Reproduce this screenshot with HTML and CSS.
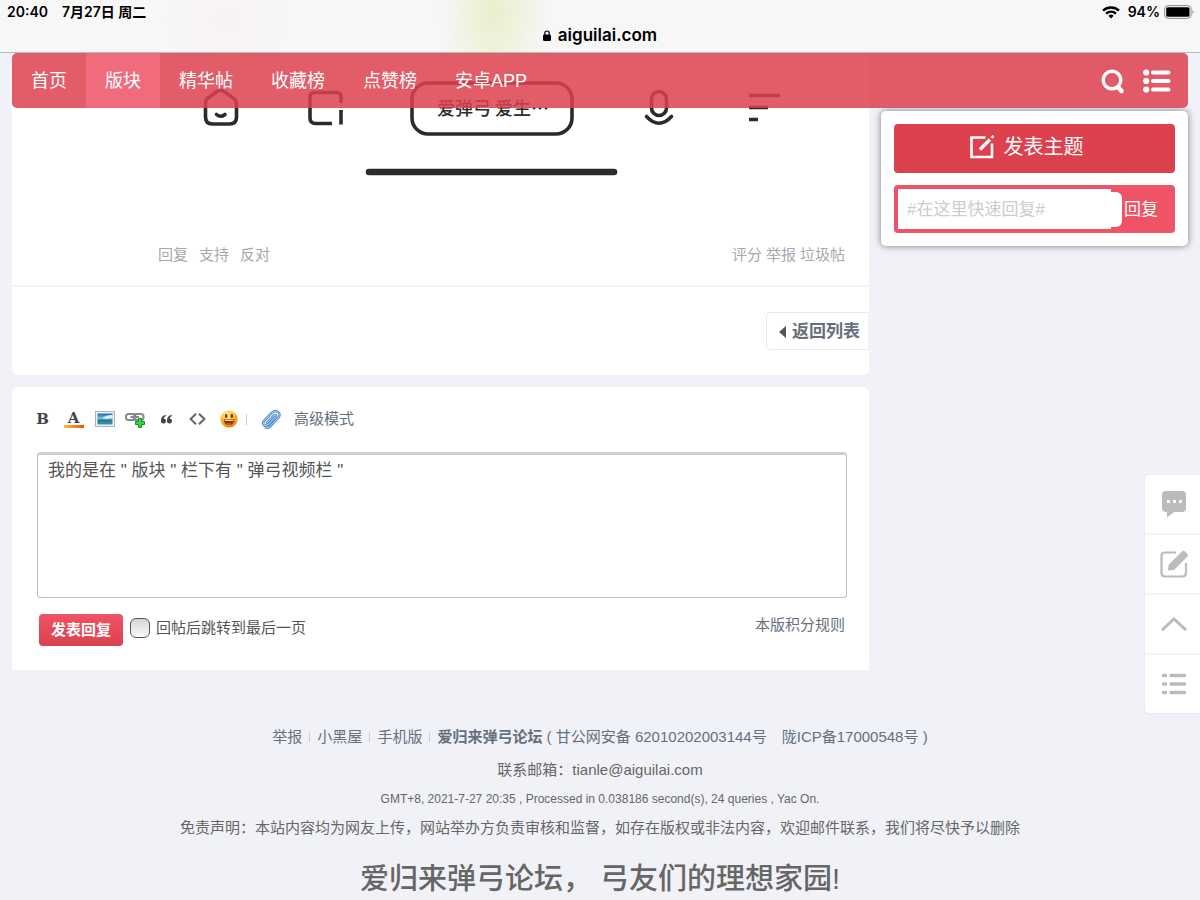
FILE: index.html
```html
<!DOCTYPE html>
<html lang="zh-CN">
<head>
<meta charset="utf-8">
<meta name="viewport" content="width=device-width, initial-scale=1">
<title>爱归来弹弓论坛</title>
<link rel="stylesheet" href="styles.css">
</head>
<body>
<header class="chrome">
  <div class="status">
    <div class="status-group"><span>20:40</span><span>7月27日 周二</span></div>
    <div class="status-group battery-group">
      <svg width="18" height="13" viewBox="0 0 18 13" fill="none" stroke="#000" stroke-width="2.4"><path d="M1 4.600C5.500.5 12.500.5 17 4.600"/><path d="M4 7.700C7 5.100 11 5.100 14 7.700"/><path d="M9 12.500 6.300 9.700Q9 7.500 11.700 9.700Z" fill="#000" stroke="none"/></svg>
      <span>94%</span>
      <svg width="31" height="14" viewBox="0 0 31 14"><rect x=".6" y=".6" width="26.500" height="12.800" rx="3.500" fill="none" stroke="#8c8c8c"/><rect x="2.200" y="2.200" width="23.300" height="9.600" rx="1.500"/><path d="M28.500 4.800Q30.500 7 28.500 9.200Z" fill="#8c8c8c"/></svg>
    </div>
  </div>
  <div class="address">
    <svg width="8" height="11" viewBox="0 0 8 11"><rect y="4.500" width="8" height="6.500" rx="1.200"/><path d="M1.800 5V3.200a2.200 2.200 0 0 1 4.400 0V5" fill="none" stroke="#000" stroke-width="1.200"/></svg>
    <span>aiguilai.com</span>
  </div>
</header>

<div class="page">
  <nav class="nav">
    <a href="#">首页</a>
    <a href="#" class="active">版块</a>
    <a href="#">精华帖</a>
    <a href="#">收藏榜</a>
    <a href="#">点赞榜</a>
    <a href="#">安卓APP</a>
    <div class="nav-tools">
      <button type="button" aria-label="搜索"><svg width="24" height="26" viewBox="0 0 24 26" fill="none" stroke="#fff" stroke-linecap="round"><circle cx="11" cy="12" r="8.800" stroke-width="3.400"/><path d="M17 19 20.500 23" stroke-width="4.400"/></svg></button>
      <button type="button" aria-label="菜单"><svg width="28" height="24" viewBox="0 0 28 24" fill="#fff"><circle cx="3.200" cy="3.500" r="3.100"/><circle cx="3.200" cy="12" r="3.100"/><circle cx="3.200" cy="20.500" r="3.100"/><path d="M10 3.500h15.500M10 12h15.500M10 20.500h15.500" stroke="#fff" stroke-width="4" stroke-linecap="round"/></svg></button>
    </div>
  </nav>

  <div class="columns">
    <main class="content">
      <article class="post">
        <div class="post-body">
          <svg class="shot" width="664" height="140" viewBox="0 0 664 140" fill="none" stroke="#2b2b2b" stroke-width="3.600" stroke-linecap="round" stroke-linejoin="round">
            <path d="M47.500 50Q47.500 47 50 45L59 38.500Q62.500 36 66 38.500L75 45Q78.500 47 78.500 51V64Q78.500 71 71.500 71H54.500Q47.500 71 47.500 64Z"/>
            <path d="M58.500 61.500Q62.500 65 67 61.500"/>
            <path d="M183 50V44Q183 39.500 178.500 39.500H156Q152 39.500 152 44V65Q152 70.500 157.500 70.500H174M183 57V71.500" stroke-linecap="butt"/>
            <rect x="254" y="30" width="160" height="51" rx="16"/>
            <rect x="493.500" y="38.500" width="15" height="24" rx="7.500"/>
            <path d="M488.500 63.500Q501 77 513.500 63.500"/>
            <path d="M591 42.500H622M591 54.500H610M591 66.500H600" stroke-linecap="butt"/>
            <path d="M211 119H456" stroke-width="6.500"/>
            <text x="279" y="62">爱弹弓 爱生…</text>
          </svg>
        </div>
        <div class="post-actions">
          <div class="action-group act-left"><a href="#">回复</a><a href="#">支持</a><a href="#">反对</a></div>
          <div class="action-group act-right"><a href="#">评分</a><a href="#">举报</a><a href="#">垃圾帖</a></div>
        </div>
        <div class="post-foot">
          <a href="#" class="back"><svg width="7" height="12" viewBox="0 0 7 12"><path d="M7 0V12L0 6Z" fill="#555"/></svg>返回列表</a>
        </div>
      </article>

      <form class="editor">
        <div class="tools">
          <button type="button" class="glyph" aria-label="粗体">B</button>
          <button type="button" class="glyph" aria-label="文字颜色"><span class="color">A</span></button>
          <button type="button" aria-label="图片"><svg width="20" height="16" viewBox="0 0 20 16"><defs><linearGradient id="sky" x2="0" y2="1"><stop stop-color="#1f65ae"/><stop offset=".45" stop-color="#79c0ea"/><stop offset=".6" stop-color="#2f7a72"/><stop offset="1" stop-color="#2c9acb"/></linearGradient></defs><rect x=".5" y=".5" width="19" height="15" fill="#edf3f7" stroke="#a4b5c0"/><rect x="2.500" y="2.500" width="15" height="11" fill="url(#sky)"/><path d="M7 7Q12 3.500 17.500 4V7L12 8Z" fill="#d9f1ff"/></svg></button>
          <button type="button" aria-label="链接"><svg width="21" height="17" viewBox="0 0 21 17" fill="none"><g stroke="#888" stroke-width="2"><rect x="1" y="3" width="9.500" height="6" rx="2.500"/><rect x="9" y="3" width="9.500" height="6" rx="2.500"/><path d="M5.500 6H14"/></g><path d="M13.500 7.500h3v3h3v3h-3v3h-3v-3h-3v-3h3Z" fill="#35d644" stroke="#159325"/></svg></button>
          <button type="button" aria-label="引用"><svg width="11" height="9" viewBox="0 0 11 9" fill="#444"><path d="M4.700 0C1.500.3 0 2.500 0 5.600A2.500 2.500 0 1 0 2.500 3.500Q3 1.800 4.900 1Z"/><path d="M10.700 0C7.500.3 6 2.500 6 5.600A2.500 2.500 0 1 0 8.500 3.500Q9 1.800 10.900 1Z"/></svg></button>
          <button type="button" aria-label="代码"><svg width="17" height="12" viewBox="0 0 17 12" fill="none" stroke="#666" stroke-width="2"><path d="M7 .8 1.600 6 7 11.200M10 .8 15.400 6 10 11.200"/></svg></button>
          <button type="button" aria-label="表情"><svg width="18" height="18" viewBox="0 0 18 18"><defs><radialGradient id="face" cx=".4" cy=".25" r=".8"><stop stop-color="#fff08a"/><stop offset=".55" stop-color="#fdb92e"/><stop offset="1" stop-color="#e36b08"/></radialGradient></defs><circle cx="9" cy="9" r="8.600" fill="url(#face)"/><ellipse cx="6.200" cy="6" rx="1.300" ry="2" fill="#70370b"/><ellipse cx="11.800" cy="6" rx="1.300" ry="2" fill="#70370b"/><path d="M3.500 9.500H14.500Q13.500 15 9 15T3.500 9.500Z" fill="#913008"/><path d="M4.500 10H13.500L13 11H5Z" fill="#ffe3a0"/><path d="M6.500 14Q9 12 11.500 14Q9 15.300 6.500 14Z" fill="#ee5648"/></svg></button>
          <span class="tool-sep"></span>
          <button type="button" aria-label="附件"><svg width="20" height="20" viewBox="0 0 20 20" fill="none" stroke-linecap="round"><path d="M6 14 13 6.500Q14.500 5.500 15 7L8 15Q5 18 3 16T3.500 11.500L11 3.700Q14.500.8 17.200 3.300T17 9L9 17.500Q7.500 19 5 18.500" stroke="#5a91c8" stroke-width="2.600"/><path d="M6 14 13 6.500Q14.500 5.500 15 7L8 15Q5 18 3 16T3.500 11.500L11 3.700Q14.500.8 17.200 3.300T17 9L9 17.500Q7.500 19 5 18.500" stroke="#a9cff1"/></svg></button>
          <a href="#" class="advanced">高级模式</a>
        </div>
        <textarea aria-label="回复内容">我的是在 " 版块 " 栏下有 " 弹弓视频栏 "</textarea>
        <div class="submit-row">
          <button type="submit" class="submit">发表回复</button>
          <input type="checkbox" id="jump" class="check">
          <label for="jump">回帖后跳转到最后一页</label>
          <a href="#" class="rules">本版积分规则</a>
        </div>
      </form>
    </main>

    <aside class="side">
      <div class="panel">
        <button type="button" class="new-topic"><svg width="24" height="24" viewBox="0 0 24 24" fill="none" stroke="#fff" stroke-width="2.600"><path d="M15.500 2.500H1.500V22H22V8.500"/><path d="M10 14.500 20 4.500" stroke-width="3.400"/><path d="M21.500 2.800 23.500.8" stroke-width="2.500"/></svg>发表主题</button>
        <form class="quick">
          <input type="text" placeholder="#在这里快速回复#" aria-label="快速回复">
          <span class="notch"></span>
          <button type="submit">回复</button>
        </form>
      </div>
    </aside>
  </div>

  <footer class="footer">
    <p class="links"><a href="#">举报</a><i></i><a href="#">小黑屋</a><i></i><a href="#">手机版</a><i></i><a href="#"><b>爱归来弹弓论坛</b></a>&nbsp;( <a href="#">甘公网安备 62010202003144号</a>&emsp;<a href="#">陇ICP备17000548号</a> )</p>
    <p>联系邮箱：tianle@aiguilai.com</p>
    <p class="stats">GMT+8, 2021-7-27 20:35 , Processed in 0.038186 second(s), 24 queries , Yac On.</p>
    <p class="disclaimer">免责声明：本站内容均为网友上传，网站举办方负责审核和监督，如存在版权或非法内容，欢迎邮件联系，我们将尽快予以删除</p>
    <p class="slogan">爱归来弹弓论坛， 弓友们的理想家园!</p>
  </footer>
</div>

<div class="dock">
  <button type="button" aria-label="回复"><svg width="26" height="28" viewBox="0 0 26 28"><path d="M5 1H21Q25 1 25 5V18Q25 22 21 22H13L6 27.500V22H5Q1 22 1 18V5Q1 1 5 1Z" fill="#bbb"/><path d="M6 10h3v3H6ZM12 10h3v3h-3ZM18 10h3v3h-3Z" fill="#fff"/></svg></button>
  <button type="button" aria-label="发帖"><svg width="28" height="28" viewBox="0 0 28 28"><path d="M16 2.500H5Q1.500 2.500 1.500 6V23Q1.500 26.500 5 26.500H22.500Q26 26.500 26 23V13" fill="none" stroke="#bbb" stroke-width="2.200"/><path d="M8 20.500 8.500 15 22 1.500Q23.500 0 25 1.500L27.500 4Q28.500 5.500 27 7L14 20Z" fill="#bbb"/></svg></button>
  <button type="button" aria-label="返回顶部"><svg width="26" height="14" viewBox="0 0 26 14"><path d="M1 13 13 2 25 13" fill="none" stroke="#bbb" stroke-width="3"/></svg></button>
  <button type="button" aria-label="返回列表"><svg width="26" height="22" viewBox="0 0 26 22"><path d="M2.500 2.500H4.500M10 2.500H23.500M2.500 11H4.500M10 11H23.500M2.500 19.500H4.500M10 19.500H23.500" stroke="#bbb" stroke-width="3.600" stroke-linecap="round"/></svg></button>
</div>
</body>
</html>
```
FILE: styles.css
```css
* { box-sizing: border-box; }

body {
  margin: 0;
  background: #f1f2f7;
  color: #666;
  font: 15px/24px "Liberation Sans", "Noto Sans CJK SC", sans-serif;
}

a { color: inherit; text-decoration: none; }
p { margin: 0; }
svg { display: block; flex: none; }

button {
  padding: 0;
  border: 0;
  background: none;
  color: inherit;
  font: inherit;
  cursor: pointer;
}

.chrome {
  height: 53px;
  border-bottom: 1px solid #b9babd;
  background:
    radial-gradient(ellipse 56px 100px at 494px 10px, #e8f0cc, transparent),
    radial-gradient(ellipse 60px 60px at 225px 20px, #f8f3f2, transparent),
    #f7f7f7;
  color: #000;
  font-family: Inter, "Noto Sans CJK SC", sans-serif;
  font-weight: 600;
}

.status {
  display: flex;
  justify-content: space-between;
  padding: 0 5px 0 7px;
  font-size: 14px;
}

.status-group { display: flex; align-items: center; gap: 14px; }
.battery-group { gap: 4px; }
.battery-group span { padding-left: 4px; }

.address {
  display: flex;
  align-items: center;
  justify-content: center;
  gap: 7px;
  font-size: 17px;
  line-height: 22px;
}

.page { position: relative; padding: 0 12px; }

.nav {
  position: absolute;
  z-index: 2;
  top: 0;
  left: 12px;
  right: 12px;
  display: flex;
  height: 55px;
  overflow: hidden;
  border-radius: 5px;
  background: rgba(221, 65, 78, 0.85);
  color: #fff;
  font-size: 18px;
  line-height: 57px;
}

.nav > a { padding: 0 19px; }
.nav .active { background: #f06c7d; }

.nav-tools {
  display: flex;
  align-items: center;
  gap: 18px;
  margin-left: auto;
  padding-right: 17px;
}

.columns {
  display: grid;
  grid-template-columns: 1fr 307px;
  gap: 12px;
}

.post {
  border-radius: 0 0 6px 6px;
  background: #fff;
}

.post-body { padding: 0 0 50px 146px; }
.shot { width: 664px; max-width: 100%; }
.shot text {
  fill: #2b2b2b;
  stroke: none;
  font-family: "Noto Sans CJK SC", sans-serif;
  font-size: 18px;
  font-weight: 500;
}

.post-actions {
  display: flex;
  justify-content: space-between;
  padding: 0 24px 18px 146px;
  border-bottom: 2px solid #f3f3f5;
  color: #a5a8af;
}

.action-group { display: flex; }
.act-left { gap: 11px; }
.act-right { gap: 4px; }

.post-foot {
  display: flex;
  justify-content: flex-end;
  padding: 25px 0;
}

.back {
  display: flex;
  align-items: center;
  gap: 6px;
  height: 38px;
  padding: 2px 8px 0 12px;
  border: 1px solid #e6e8ed;
  border-right-color: #f1f2f7;
  border-radius: 5px 0 0 5px;
  color: #66707d;
  font-size: 17px;
  font-weight: 700;
}

.editor {
  margin-top: 12px;
  padding: 20px 22px 24px 25px;
  border-radius: 6px 6px 0 0;
  background: #fff;
}

.tools {
  display: flex;
  align-items: center;
  height: 24px;
  margin-left: -10px;
}

.tools button {
  display: flex;
  align-items: center;
  justify-content: center;
  width: 31px;
}

.tools .glyph {
  color: #444;
  font: bold 15px/18px "DejaVu Serif", serif;
}

.color {
  width: 20px;
  border-bottom: 3px solid;
  border-image: linear-gradient(90deg, #ffc13a, #ee4a12) 1;
  line-height: 14px;
}

.tool-sep { width: 1px; height: 11px; margin: 0 8px 0 2px; background: #ccc; }
.advanced { margin-left: 8px; color: #66707d; }

textarea {
  display: block;
  width: 100%;
  height: 146px;
  margin-top: 21px;
  padding: 2px 10px;
  border: 1px solid #bfbfbf;
  border-top: 3px solid #cfcfcf;
  border-radius: 4px;
  outline: 0;
  resize: none;
  background: #fff;
  color: #555;
  font: 17px/28px "Liberation Sans", "Noto Sans CJK SC", sans-serif;
}

.submit-row {
  display: flex;
  align-items: center;
  margin-top: 15px;
  padding: 0 2px;
  color: #555;
}

.submit {
  height: 32px;
  padding: 0 12px;
  border-radius: 4px;
  background: linear-gradient(#ee5366, #dc414f);
  color: #fff;
  font-weight: 700;
}

.check {
  width: 20px;
  height: 20px;
  margin: 0 6px 3px 7px;
  appearance: none;
  border: 1px solid #555;
  border-radius: 6px;
  background: linear-gradient(#d5d5d5, #fafafa);
}

.submit-row label { margin-bottom: 3px; }
.rules { margin: 0 0 9px auto; color: #66707d; }

.panel {
  margin-top: 58px;
  padding: 13px;
  border-radius: 5px;
  background: #fff;
  box-shadow: 0 0 7px rgba(0, 0, 0, 0.5);
}

.new-topic {
  display: flex;
  align-items: center;
  justify-content: center;
  gap: 10px;
  width: 100%;
  height: 49px;
  padding: 0 16px 3px 0;
  border-radius: 4px;
  background: #dd414e;
  color: #fff;
  font-size: 20px;
}

.quick {
  display: flex;
  align-items: center;
  height: 48px;
  margin-top: 12px;
  padding: 4px;
  border-radius: 4px;
  background: #ee5366;
}

.quick input {
  flex: 1;
  min-width: 0;
  height: 40px;
  padding: 2px 9px 0;
  border: 0;
  border-radius: 0;
  outline: 0;
  background: #fff;
  font: 17px "Liberation Sans", "Noto Sans CJK SC", sans-serif;
}

.quick input::placeholder { color: #ccc; }
.notch { width: 11px; height: 35px; border-radius: 0 6px 6px 0; background: #fff; }
.quick button { width: 49px; padding: 2px 0 0 2px; color: #fff; font-size: 17px; text-align: left; }

.footer {
  display: flex;
  flex-direction: column;
  align-items: center;
  gap: 9px;
  margin-top: 55px;
  text-align: center;
}

.links { color: #66707d; }
.links b { font-weight: 700; }
.links i {
  display: inline-block;
  width: 1px;
  height: 10px;
  margin: 0 7px;
  background: #ccc;
}

.stats { font-size: 12px; line-height: 16px; }

.slogan {
  padding-top: 12px;
  font-size: 29px;
  font-weight: 500;
  line-height: 36px;
}

.dock {
  position: fixed;
  top: 475px;
  right: 0;
  width: 55px;
  overflow: hidden;
  border-radius: 4px 0 0 4px;
  background: #fff;
  box-shadow: 0 0 2px rgba(0, 0, 0, 0.1);
}

.dock button {
  display: flex;
  align-items: center;
  justify-content: center;
  width: 100%;
  height: 60px;
  padding-left: 3px;
  border-bottom: 2px solid #f3f3f4;
}

.dock button:last-child { height: 58px; border-bottom: 0; }
```
